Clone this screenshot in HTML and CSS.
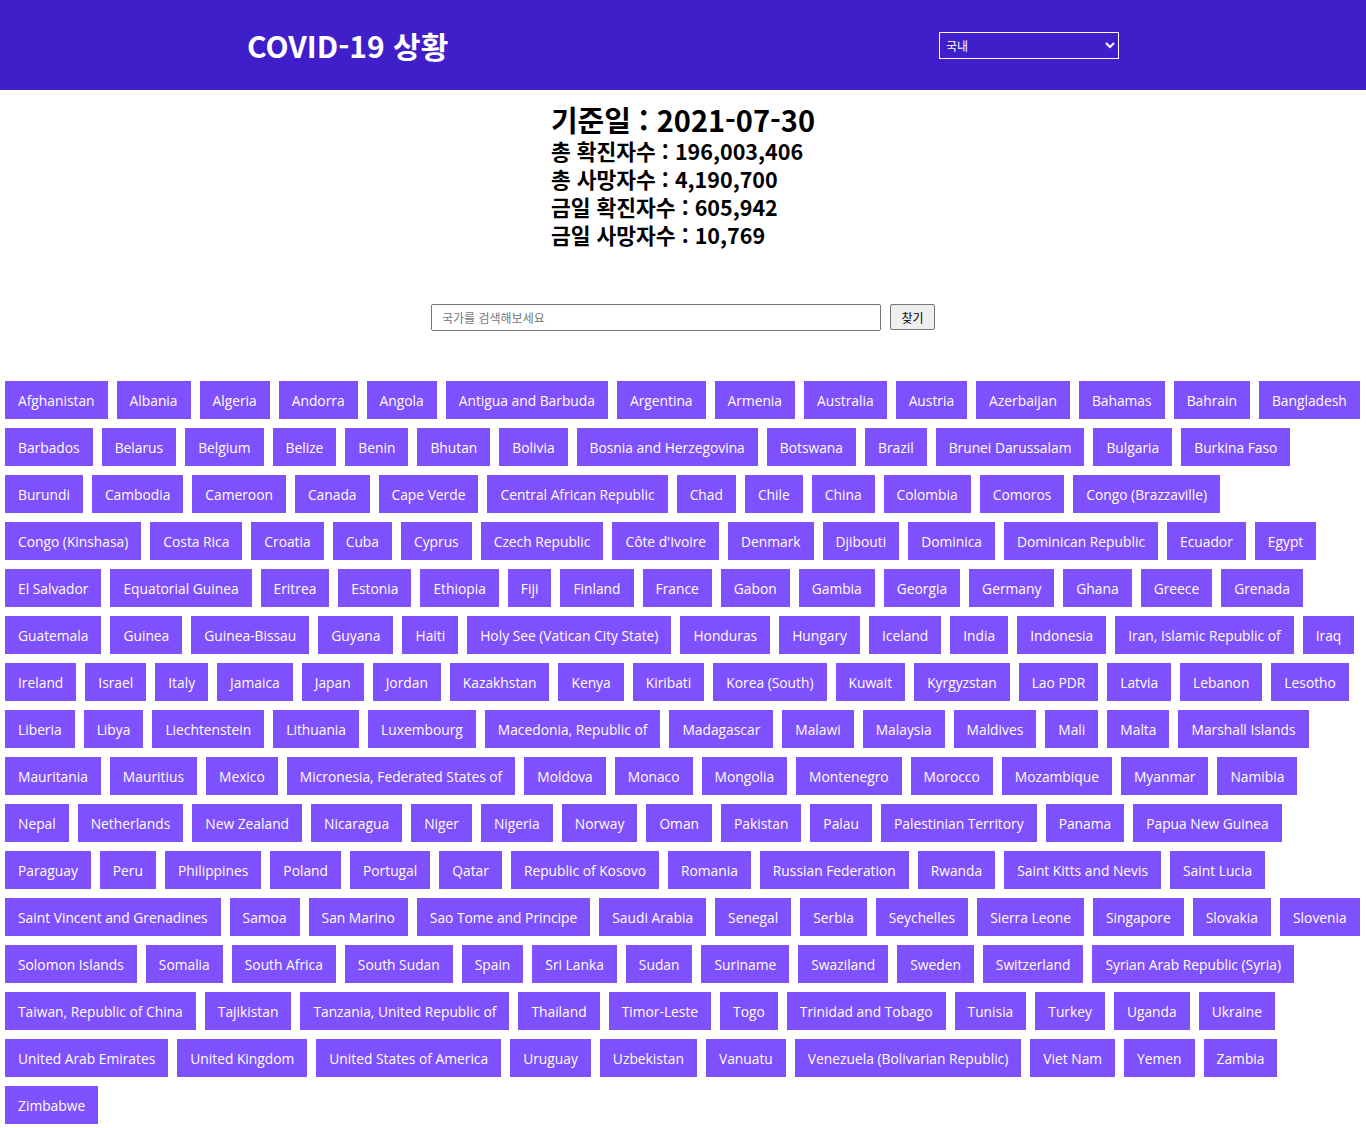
FILE: index.html
```html
<!DOCTYPE html>
<html lang="ko">
<head>
<meta charset="utf-8">
<title>COVID-19 상황</title>
<link rel="stylesheet" href="styles.css">
</head>
<body>
<header class="topbar">
  <h1 class="brand">COVID-19 상황</h1>
  <select class="scope">
    <option>국내</option>
    <option>세계</option>
  </select>
</header>
<main>
  <section class="summary">
    <div class="summary-inner">
      <h2 class="date">기준일 : 2021-07-30</h2>
      <p class="stat">총 확진자수 : 196,003,406</p>
      <p class="stat">총 사망자수 : 4,190,700</p>
      <p class="stat">금일 확진자수 : 605,942</p>
      <p class="stat">금일 사망자수 : 10,769</p>
    </div>
  </section>
  <form class="search" onsubmit="return false">
    <input class="search-input" type="text" placeholder="국가를 검색해보세요">
    <button class="search-btn" type="submit">찾기</button>
  </form>
  <section class="countries" id="countries"></section>
</main>
<script src="app.js"></script>
</body>
</html>
```

FILE: app.js
```js
const names = ["Afghanistan","Albania","Algeria","Andorra","Angola","Antigua and Barbuda","Argentina","Armenia","Australia","Austria","Azerbaijan","Bahamas","Bahrain","Bangladesh","Barbados","Belarus","Belgium","Belize","Benin","Bhutan","Bolivia","Bosnia and Herzegovina","Botswana","Brazil","Brunei Darussalam","Bulgaria","Burkina Faso","Burundi","Cambodia","Cameroon","Canada","Cape Verde","Central African Republic","Chad","Chile","China","Colombia","Comoros","Congo (Brazzaville)","Congo (Kinshasa)","Costa Rica","Croatia","Cuba","Cyprus","Czech Republic","Côte d'Ivoire","Denmark","Djibouti","Dominica","Dominican Republic","Ecuador","Egypt","El Salvador","Equatorial Guinea","Eritrea","Estonia","Ethiopia","Fiji","Finland","France","Gabon","Gambia","Georgia","Germany","Ghana","Greece","Grenada","Guatemala","Guinea","Guinea-Bissau","Guyana","Haiti","Holy See (Vatican City State)","Honduras","Hungary","Iceland","India","Indonesia","Iran, Islamic Republic of","Iraq","Ireland","Israel","Italy","Jamaica","Japan","Jordan","Kazakhstan","Kenya","Kiribati","Korea (South)","Kuwait","Kyrgyzstan","Lao PDR","Latvia","Lebanon","Lesotho","Liberia","Libya","Liechtenstein","Lithuania","Luxembourg","Macedonia, Republic of","Madagascar","Malawi","Malaysia","Maldives","Mali","Malta","Marshall Islands","Mauritania","Mauritius","Mexico","Micronesia, Federated States of","Moldova","Monaco","Mongolia","Montenegro","Morocco","Mozambique","Myanmar","Namibia","Nepal","Netherlands","New Zealand","Nicaragua","Niger","Nigeria","Norway","Oman","Pakistan","Palau","Palestinian Territory","Panama","Papua New Guinea","Paraguay","Peru","Philippines","Poland","Portugal","Qatar","Republic of Kosovo","Romania","Russian Federation","Rwanda","Saint Kitts and Nevis","Saint Lucia","Saint Vincent and Grenadines","Samoa","San Marino","Sao Tome and Principe","Saudi Arabia","Senegal","Serbia","Seychelles","Sierra Leone","Singapore","Slovakia","Slovenia","Solomon Islands","Somalia","South Africa","South Sudan","Spain","Sri Lanka","Sudan","Suriname","Swaziland","Sweden","Switzerland","Syrian Arab Republic (Syria)","Taiwan, Republic of China","Tajikistan","Tanzania, United Republic of","Thailand","Timor-Leste","Togo","Trinidad and Tobago","Tunisia","Turkey","Uganda","Ukraine","United Arab Emirates","United Kingdom","United States of America","Uruguay","Uzbekistan","Vanuatu","Venezuela (Bolivarian Republic)","Viet Nam","Yemen","Zambia","Zimbabwe"];
const box = document.getElementById("countries");
for (const n of names) {
  const b = document.createElement("button");
  b.className = "country";
  b.type = "button";
  b.textContent = n;
  box.appendChild(b);
}
```

FILE: styles.css
```css
* { box-sizing: border-box; }
body {
  margin: 0;
  font-family: "Noto Sans CJK KR", "Open Sans", sans-serif;
  color: #000;
  background: #fff;
}
.topbar {
  height: 90px;
  background: #3f1fc9;
  display: flex;
  align-items: center;
  padding-left: 247px;
}
.brand {
  margin: 0;
  color: #fff;
  font-size: 30px;
  font-weight: 700;
  width: 692px;
  line-height: 1;
}
.scope {
  width: 180px;
  height: 27px;
  background: transparent;
  color: #fff;
  border: 1px solid #fff;
  font-size: 12px;
  font-family: "Noto Sans CJK KR", sans-serif;
  padding: 0 2px;
}
.scope option { color: #000; }
.summary {
  display: flex;
  justify-content: center;
  padding-top: 13px;
}
.summary-inner { text-align: left; }
.date {
  margin: 0 0 2px;
  font-size: 29px;
  font-weight: 700;
  line-height: 32px;
}
.stat {
  margin: 0;
  font-size: 21.5px;
  font-weight: 700;
  line-height: 28px;
}
.search {
  display: flex;
  justify-content: center;
  gap: 9px;
  margin-top: 55px;
}
.search-input {
  width: 450px;
  height: 27px;
  border: 1px solid #767676;
  border-radius: 2px;
  padding: 0 10px;
  font-size: 12px;
  font-family: "Noto Sans CJK KR", sans-serif;
}
.search-input::placeholder { color: #777; }
.search-btn {
  width: 45px;
  height: 26px;
  border: 1px solid #767676;
  border-radius: 2px;
  background: #efefef;
  font-size: 12px;
  font-family: "Noto Sans CJK KR", sans-serif;
  padding: 0;
}
.countries {
  display: flex;
  flex-wrap: wrap;
  gap: 9px;
  padding: 50px 5px 0;
}
.country {
  height: 38px;
  padding: 0 13px;
  border: 0;
  background: #7f50fe;
  color: #fff;
  font-family: "Open Sans", sans-serif;
  font-size: 13.8px;
}
```
